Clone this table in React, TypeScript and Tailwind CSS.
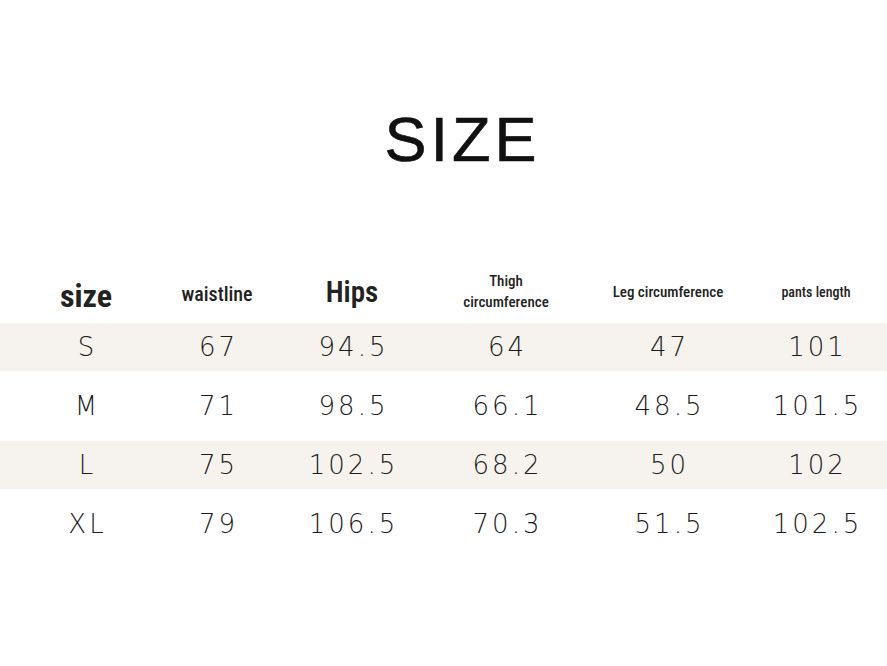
import React from 'react';

const headFont = "font-['Roboto_Condensed','Liberation_Sans_Narrow','DejaVu_Sans_Condensed',sans-serif]";

const rows = [
  { size: 'S', values: ['67', '94.5', '64', '47', '101'], striped: true },
  { size: 'M', values: ['71', '98.5', '66.1', '48.5', '101.5'], striped: false },
  { size: 'L', values: ['75', '102.5', '68.2', '50', '102'], striped: true },
  { size: 'XL', values: ['79', '106.5', '70.3', '51.5', '102.5'], striped: false },
];

const cols = 'grid grid-cols-[172px_90px_180px_128px_196px_100px_21px]';

export default function App() {
  return (
    <div className="w-[887px] h-[666px] bg-white overflow-hidden">
      <div className="pt-[108px] flex justify-center">
        <h1 className="pl-[38px] text-[63px] leading-none tracking-[4px] text-[#111] font-['Liberation_Sans',Arial,sans-serif] [-webkit-text-stroke:0.6px_#111]">
          SIZE
        </h1>
      </div>

      <div className="mt-[94px]">
        <div className={`${cols} h-[58px] items-center text-[#222] ${headFont}`}>
          <div className="text-center text-[32px] font-bold pt-[4px]">size</div>
          <div className="text-center text-[20px] font-medium">waistline</div>
          <div className="text-center text-[29px] font-semibold -mt-[2px]">Hips</div>
          <div className="text-center text-[15px] font-medium leading-[21px] -mt-[4px]">
            Thigh
            <br />
            circumference
          </div>
          <div className="text-center text-[15px] font-medium -mt-[4px]">Leg circumference</div>
          <div className="text-center text-[14px] font-medium -mt-[4px]">pants length</div>
          <div />
        </div>

        {rows.map((r) => (
          <div
            key={r.size}
            className={`${cols} items-center text-[#1c1c1c] text-[26px] font-extralight tracking-[3px] font-['DejaVu_Sans',sans-serif] ${
              r.striped ? 'h-[48px] bg-[#f6f3ef]' : 'h-[70px]'
            }`}
          >
            <div className="text-center pl-[3px]">{r.size}</div>
            {r.values.map((v, i) => (
              <div key={i} className="text-center pl-[3px]">
                {v}
              </div>
            ))}
            <div />
          </div>
        ))}
      </div>
    </div>
  );
}
